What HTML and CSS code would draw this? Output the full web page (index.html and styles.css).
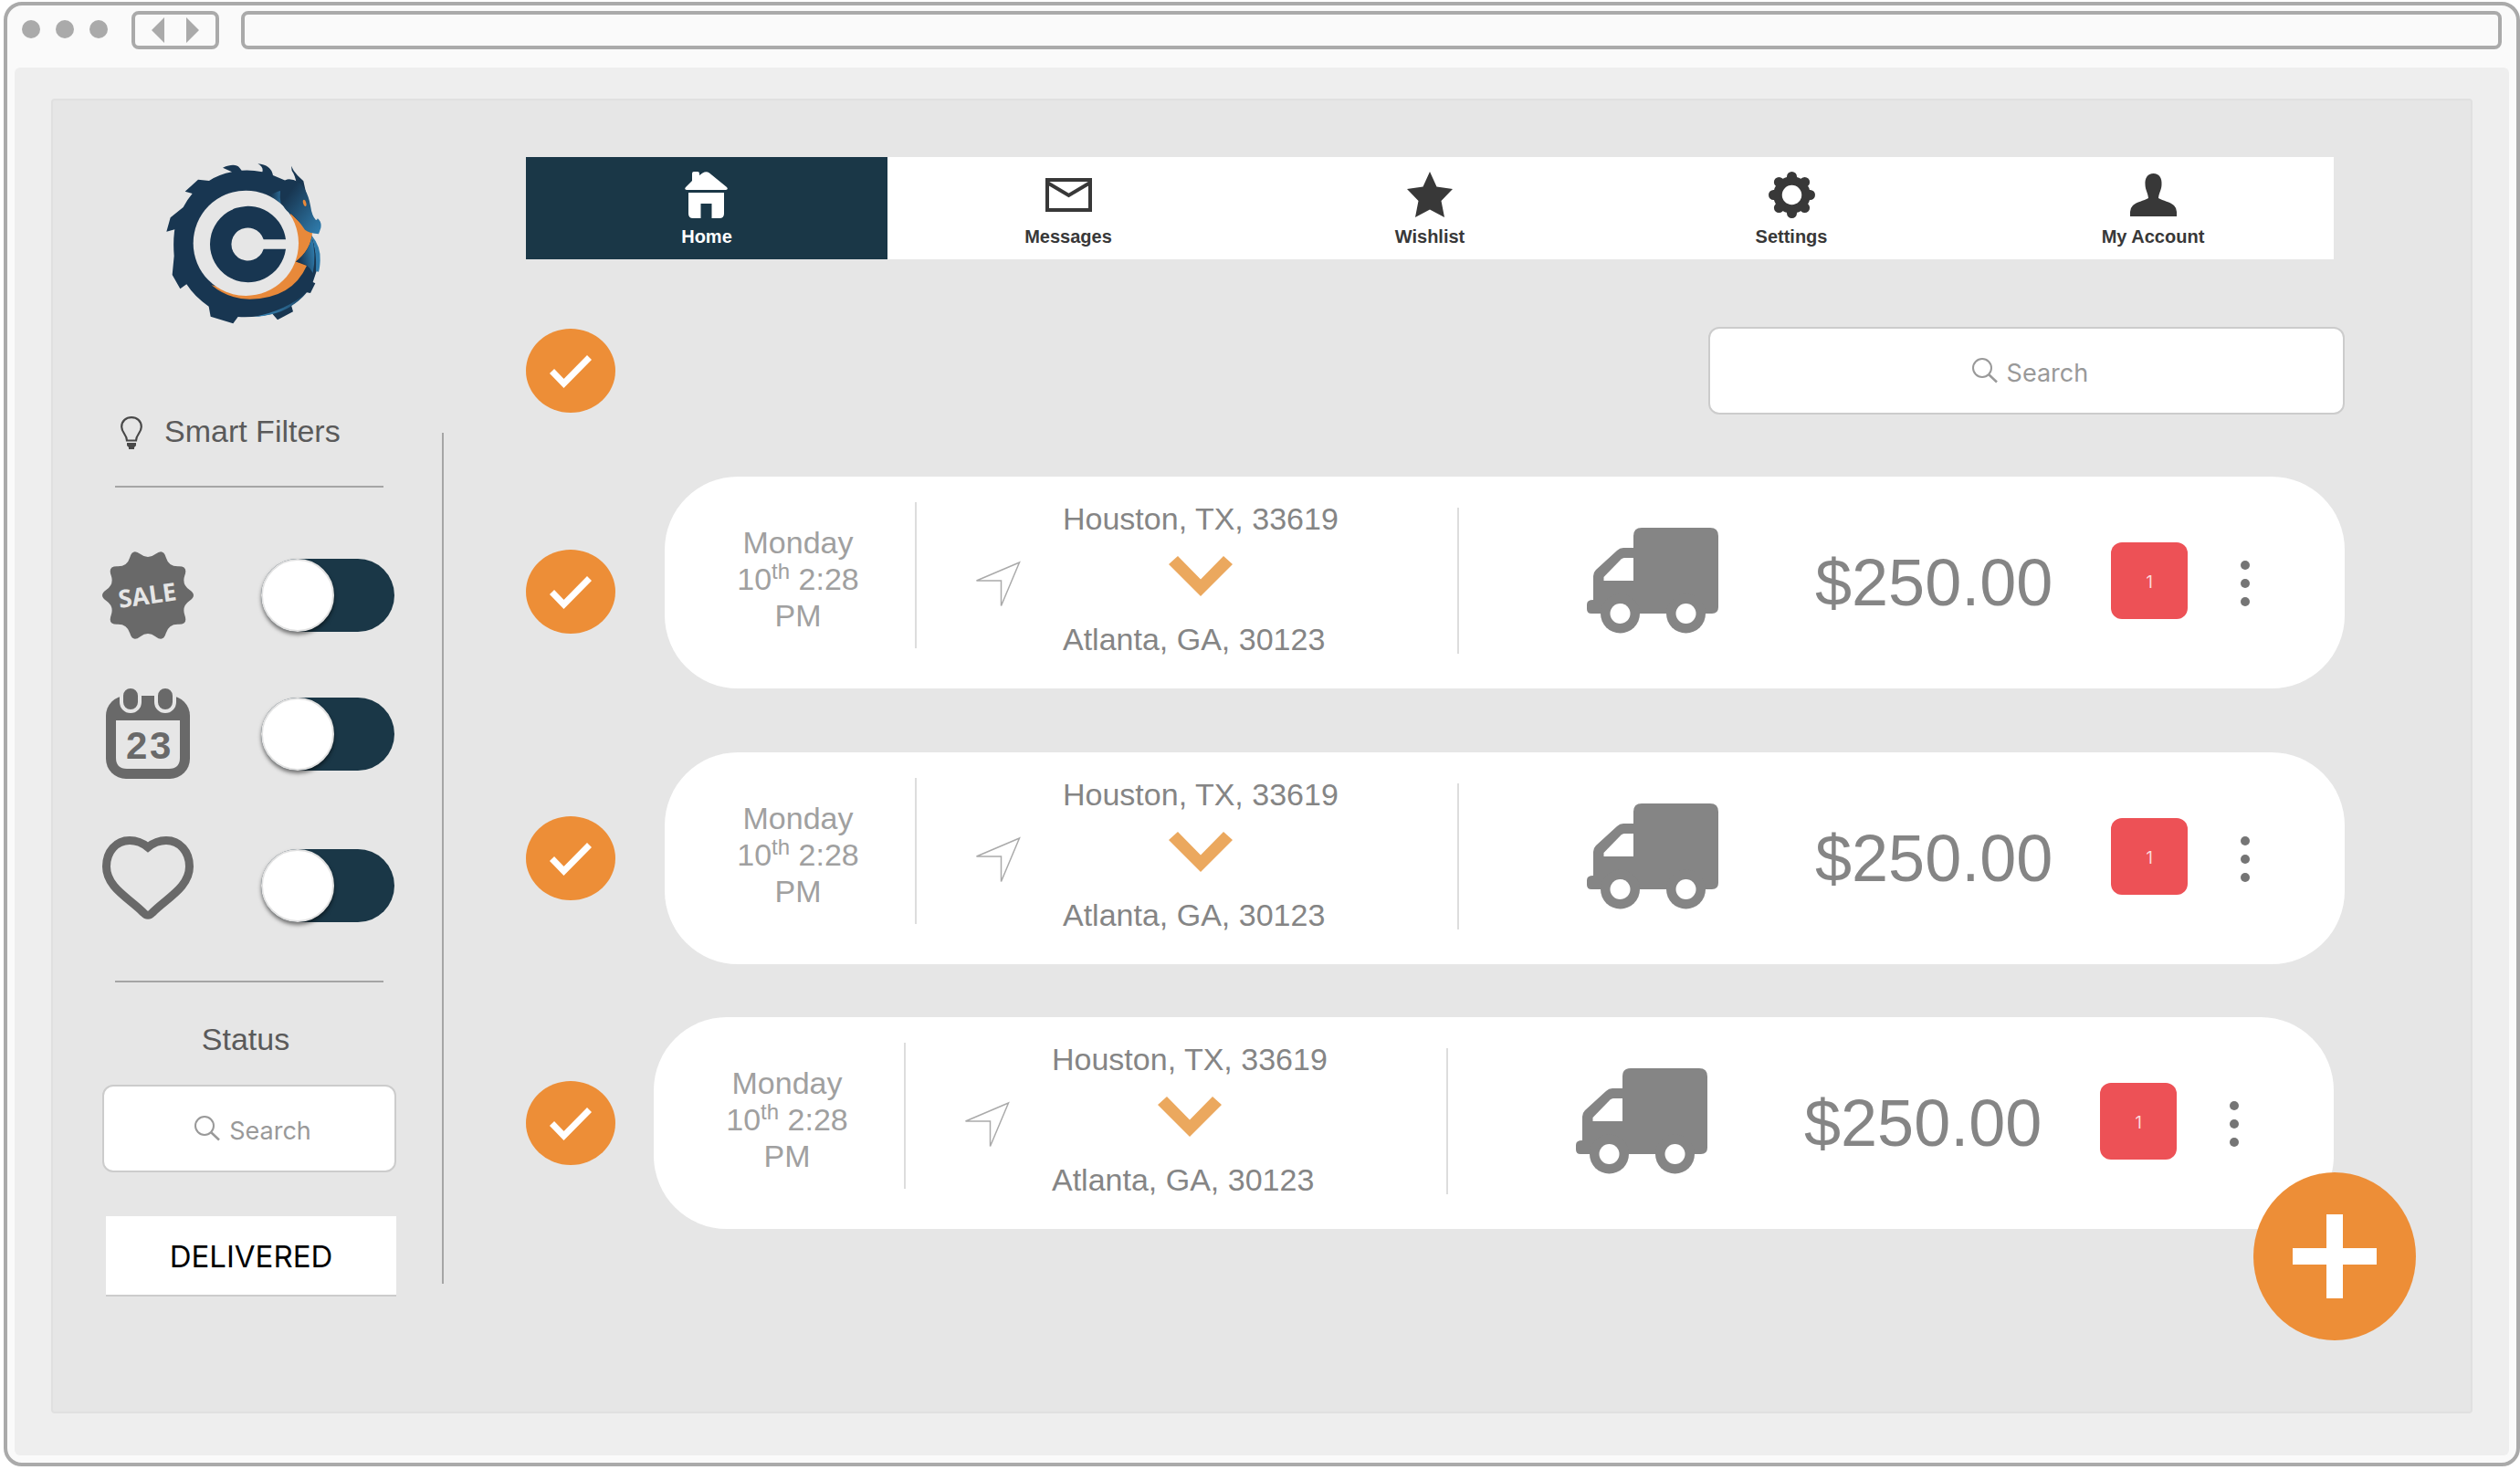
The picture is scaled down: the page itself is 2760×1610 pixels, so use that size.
FILE: index.html
```html
<!DOCTYPE html>
<html lang="en">
<head>
<meta charset="utf-8">
<meta name="viewport" content="width=device-width, initial-scale=1">
<title>Orders</title>
<link rel="stylesheet" href="styles.css">
</head>
<body>

<svg class="sprite" width="0" height="0" aria-hidden="true">
  <symbol id="i-search" viewBox="0 0 28 28">
    <circle cx="11" cy="11" r="10" fill="none" stroke="currentColor" stroke-width="2"/>
    <path d="M18.500 18.500L27 26.500" fill="none" stroke="currentColor" stroke-width="2.500"/>
  </symbol>
  <symbol id="i-check" viewBox="0 0 98 92">
    <path d="M28.500 46.500L41.500 60L69.500 31.500" fill="none" stroke="currentColor" stroke-width="7"/>
  </symbol>
  <symbol id="i-send" viewBox="0 0 50 56">
    <path d="M48.500 5L1.500 25H28.500V52.500Z" fill="none" stroke="currentColor" stroke-width="1.500"/>
  </symbol>
  <symbol id="i-chevron" viewBox="0 0 70 44">
    <path d="M0 9L10 0L35 25.500L60 0L70 9L35 44Z" fill="currentColor"/>
  </symbol>
  <symbol id="i-truck" viewBox="0 0 144 116">
    <path d="M51 22V9Q51 0 60 0H135Q144 0 144 9V87Q144 94 137 94H5Q0 94 0 89V84Q0 79 7 79V53Q7 49 10 46L33 25Q36 22 40 22Z" fill="currentColor"/>
    <path d="M51 33H41Q39 33 37.500 34.500L18.500 54V58H51Z" fill="#fff"/>
    <circle cx="36.500" cy="94" r="21.500" fill="currentColor"/><circle cx="36.500" cy="94" r="11" fill="#fff"/>
    <circle cx="108.500" cy="94" r="21.500" fill="currentColor"/><circle cx="108.500" cy="94" r="11" fill="#fff"/>
  </symbol>
  <symbol id="i-more" viewBox="0 0 10 50">
    <circle cx="5" cy="5" r="5" fill="currentColor"/><circle cx="5" cy="25" r="5" fill="currentColor"/><circle cx="5" cy="45" r="5" fill="currentColor"/>
  </symbol>
</svg>

<div class="browser">
  <header class="chrome">
    <span class="dot"></span><span class="dot"></span><span class="dot"></span>
    <div class="history">
      <svg width="52" height="28" viewBox="0 0 52 28" aria-hidden="true"><path d="M14 0V28L0 14ZM38 0V28L52 14Z" fill="#aaa"/></svg>
    </div>
    <input class="address" type="text" aria-label="Address">
  </header>

  <div class="viewport">
    <div class="canvas">
      <div class="columns">

        <aside class="sidebar">
          <a class="logo" href="#" aria-label="Company home">
            <svg width="170" height="176" viewBox="36 26 510 528" aria-hidden="true">
              <defs>
                <linearGradient id="g-head" x1="0.100" y1="0.200" x2="0.900" y2="1"><stop offset="0.100" stop-color="#183651"/><stop offset="1" stop-color="#2f7bab"/></linearGradient>
                <linearGradient id="g-fan" x1="0.100" y1="0.700" x2="1" y2="0.400"><stop offset="0.100" stop-color="#183651"/><stop offset="1" stop-color="#2f7bab"/></linearGradient>
                <linearGradient id="g-neck" x1="0" y1="0" x2="1" y2="0"><stop offset="0.200" stop-color="#183651"/><stop offset="1" stop-color="#2a6a96"/></linearGradient>
                <linearGradient id="g-tail" x1="0" y1="0" x2="1" y2="0"><stop offset="0" stop-color="#3a8dc0"/><stop offset="1" stop-color="#1d4767"/></linearGradient>
              </defs>
              <path fill="#183651" d="M222 40Q262 23 277 40L284 49Q315 46 352 54Q357 38 337 27Q380 30 387 65L428 82L490 150L505 250L514 262Q534 320 530 380L518 416L526 420L510 452L498 450Q472 480 447 492L453 513L402 540L385 520Q330 533 272 530L256 552L182 529L176 496Q130 465 103 423L82 438L56 392L62 330Q58 280 64 243L37 250L50 204L92 170Q105 145 122 125L98 118L141 79L177 83Q210 62 252 54Z"/>
              <path fill="url(#g-neck)" d="M372 132Q396 120 411 116Q408 136 413 158Q396 142 372 132Z"/>
              <path fill="#e8893a" d="M185 426Q240 472 310 472Q450 470 498 362L440 340L300 450ZM445 190L440 290L460 350Q512 310 516 255L480 225Z"/>
              <circle cx="298" cy="288" r="173" fill="#e6e6e6"/>
              <path fill="#183651" fill-rule="evenodd" d="M429 276A125 125 0 1 0 429 307H356A54 54 0 1 1 356 276Z"/>
              <path fill="#2f7bab" d="M514 262Q545 300 542 345Q541 370 537 382L528 380Q532 320 514 262Z"/>
              <path fill="url(#g-fan)" d="M462 349Q508 315 514 264Q530 325 518 386Q500 350 462 349Z"/>
              <path fill="#183651" d="M447 34Q454 52 468 66L487 84L496 125L465 95Q460 65 449 50Z"/>
              <path fill="url(#g-head)" d="M411 118Q413 80 440 78Q470 78 490 108Q505 135 510 165Q515 200 528 212Q534 212 533 206Q548 218 544 238L537 258Q508 256 492 244Q470 212 448 192Q412 175 411 118Z"/>
              <ellipse cx="491" cy="156" rx="5" ry="11" fill="#e8893a" transform="rotate(-15 491 156)"/>
              <path fill="url(#g-tail)" d="M325 530Q430 510 498 450Q450 506 385 521Q355 529 325 530Z"/>
            </svg>
          </a>

          <h2 class="heading">
            <svg width="24" height="36" viewBox="0 0 24 36" aria-hidden="true">
              <path d="M7 26.500C7 20 1.200 18 1.200 11.500C1.200 5 6 1.200 12 1.200C18 1.200 22.800 5 22.800 11.500C22.800 18 17 20 17 26.500Z" fill="none" stroke="#484848" stroke-width="2.200"/>
              <path d="M7 29H17V32L15 34V36H9V34L7 32Z" fill="#484848"/>
            </svg>
            Smart Filters
          </h2>
          <hr class="rule">

          <ul class="filters">
            <li class="filter">
              <svg width="100" height="96" viewBox="0 0 100 96" aria-hidden="true">
                <path fill="#696969" d="M95.600 42Q104.400 48 95.600 54T90.400 70T83.350 79.650T69.750 89.500T58.400 93.200T41.600 93.200T30.250 89.500T16.650 79.650T9.600 70T4.400 54T4.400 42T9.600 26T16.650 16.350T30.250 6.500T41.600 2.800T58.400 2.800T69.750 6.500T83.350 16.350T90.400 26T95.600 42Z"/>
                <text class="sale-text" x="19" y="62" transform="rotate(-8 19 62)">SALE</text>
              </svg>
              <input class="toggle" type="checkbox" role="switch" aria-label="On sale">
            </li>
            <li class="filter">
              <svg width="100" height="100" viewBox="-4 0 100 100" aria-hidden="true">
                <rect x="0" y="8" width="92" height="91" rx="22" fill="#696969"/>
                <path d="M11 35H81V76Q81 88 69 88H23Q11 88 11 76Z" fill="#e6e6e6"/>
                <rect x="17" y="-2" width="20" height="27" rx="10" fill="#696969" stroke="#e6e6e6" stroke-width="4"/>
                <rect x="55" y="-2" width="20" height="27" rx="10" fill="#696969" stroke="#e6e6e6" stroke-width="4"/>
                <text class="day-text" x="22" y="77">2</text><text class="day-text" x="48" y="77">3</text>
              </svg>
              <input class="toggle" type="checkbox" role="switch" aria-label="By date">
            </li>
            <li class="filter filter-favorites">
              <svg width="100" height="108" viewBox="0 0 100 108" aria-hidden="true">
                <path d="M50 12C44 7 37 4.500 30 4.500C15 4.500 4.500 17 4.500 33C4.500 56 30 68 45 83.500Q50 89 55 83.500C70 68 95.500 56 95.500 33C95.500 17 85 4.500 70 4.500C63 4.500 56 7 50 12Z" fill="none" stroke="#696969" stroke-width="9"/>
              </svg>
              <input class="toggle" type="checkbox" role="switch" aria-label="Favorites">
            </li>
          </ul>
          <hr class="rule">

          <h2 class="status">Status</h2>
          <label class="search">
            <svg width="28" height="28" aria-hidden="true"><use href="#i-search"/></svg>
            <input type="search" placeholder="Search" aria-label="Search status">
          </label>
          <button class="delivered" type="button">DELIVERED</button>
        </aside>

        <div class="divider"></div>

        <main class="main">
          <nav class="tabs" aria-label="Main">
            <a class="tab tab-active" href="#" aria-current="page">
              <svg width="48" height="51" viewBox="0 0 48 51" aria-hidden="true"><path fill="currentColor" d="M1 17L8 10V2Q8 0 10 0H14Q16 0 16 2V4L19.500 1.500Q23.500 -1 27 1.500L46 17Q48 19.500 45 20H2Q-1 19.500 1 17ZM4 23H43V46Q43 51 38 51H29.500V35H17.500V51H9Q4 51 4 46Z"/></svg>
              Home
            </a>
            <a class="tab" href="#">
              <svg width="51" height="51" viewBox="0 -7 51 51" aria-hidden="true"><path d="M2 2H49V35H2ZM2 5L25.500 19L49 5" fill="none" stroke="currentColor" stroke-width="4"/></svg>
              Messages
            </a>
            <a class="tab" href="#">
              <svg width="50" height="51" viewBox="0 0 50 51" aria-hidden="true"><path fill="currentColor" d="M25 0L32.500 16.500L50 19L37.500 32L41 50L25 41.500L9 50L12.500 32L0 19L17.500 16.500Z"/></svg>
              Wishlist
            </a>
            <a class="tab" href="#">
              <svg width="51" height="51" viewBox="-25.500 -25.500 51 51" aria-hidden="true">
                <circle r="15.500" fill="none" stroke="currentColor" stroke-width="9.500"/>
                <path d="M0 -18V-20M0 18V20M-18 0H-20M18 0H20M12.700 12.700L14.100 14.100M-12.700 12.700L-14.100 14.100M12.700 -12.700L14.100 -14.100M-12.700 -12.700L-14.100 -14.100" fill="none" stroke="currentColor" stroke-width="11" stroke-linecap="round"/>
              </svg>
              Settings
            </a>
            <a class="tab" href="#">
              <svg width="51" height="51" viewBox="0 -2 51 51" aria-hidden="true"><path fill="currentColor" d="M25.500 0C32 0 35 5 34.500 12C34.500 18 31.500 21 31 27C36 30 44 31 48 35Q51 38 51 42V47H0V42Q0 38 3 35C7 31 15 30 20 27C19.500 21 16.500 18 16.500 12C16 5 19 0 25.500 0Z"/></svg>
              My Account
            </a>
          </nav>

          <div class="toolbar">
            <label class="check"><input type="checkbox" checked aria-label="Select all orders"><svg width="98" height="92" aria-hidden="true"><use href="#i-check"/></svg></label>
            <label class="search search-orders">
              <svg width="28" height="28" aria-hidden="true"><use href="#i-search"/></svg>
              <input type="search" placeholder="Search" aria-label="Search orders">
            </label>
          </div>

          <ul class="orders">
            <li class="order order-first">
              <label class="check"><input type="checkbox" checked aria-label="Select order 1"><svg width="98" height="92" aria-hidden="true"><use href="#i-check"/></svg></label>
              <article class="card">
                <div class="date"><p>Monday 10<sup>th</sup> 2:28 PM</p></div>
                <div class="trip">
                  <svg class="send" width="50" height="56" aria-hidden="true"><use href="#i-send"/></svg>
                  <div class="route"><p>Houston, TX, 33619</p><svg class="arrow" width="70" height="44" aria-hidden="true"><use href="#i-chevron"/></svg><p>Atlanta, GA, 30123</p></div>
                </div>
                <div class="summary">
                  <svg class="truck" width="144" height="116" aria-hidden="true"><use href="#i-truck"/></svg>
                  <p class="price">$250.00</p>
                  <span class="badge">1</span>
                  <button class="more" type="button" aria-label="More actions"><svg width="10" height="50" aria-hidden="true"><use href="#i-more"/></svg></button>
                </div>
              </article>
            </li>
            <li class="order order-second">
              <label class="check"><input type="checkbox" checked aria-label="Select order 2"><svg width="98" height="92" aria-hidden="true"><use href="#i-check"/></svg></label>
              <article class="card">
                <div class="date"><p>Monday 10<sup>th</sup> 2:28 PM</p></div>
                <div class="trip">
                  <svg class="send" width="50" height="56" aria-hidden="true"><use href="#i-send"/></svg>
                  <div class="route"><p>Houston, TX, 33619</p><svg class="arrow" width="70" height="44" aria-hidden="true"><use href="#i-chevron"/></svg><p>Atlanta, GA, 30123</p></div>
                </div>
                <div class="summary">
                  <svg class="truck" width="144" height="116" aria-hidden="true"><use href="#i-truck"/></svg>
                  <p class="price">$250.00</p>
                  <span class="badge">1</span>
                  <button class="more" type="button" aria-label="More actions"><svg width="10" height="50" aria-hidden="true"><use href="#i-more"/></svg></button>
                </div>
              </article>
            </li>
            <li class="order order-third">
              <label class="check"><input type="checkbox" checked aria-label="Select order 3"><svg width="98" height="92" aria-hidden="true"><use href="#i-check"/></svg></label>
              <article class="card">
                <div class="date"><p>Monday 10<sup>th</sup> 2:28 PM</p></div>
                <div class="trip">
                  <svg class="send" width="50" height="56" aria-hidden="true"><use href="#i-send"/></svg>
                  <div class="route"><p>Houston, TX, 33619</p><svg class="arrow" width="70" height="44" aria-hidden="true"><use href="#i-chevron"/></svg><p>Atlanta, GA, 30123</p></div>
                </div>
                <div class="summary">
                  <svg class="truck" width="144" height="116" aria-hidden="true"><use href="#i-truck"/></svg>
                  <p class="price">$250.00</p>
                  <span class="badge">1</span>
                  <button class="more" type="button" aria-label="More actions"><svg width="10" height="50" aria-hidden="true"><use href="#i-more"/></svg></button>
                </div>
              </article>
            </li>
          </ul>
        </main>
      </div>

      <button class="add" type="button" aria-label="Add order">
        <svg width="92" height="92" viewBox="0 0 92 92" aria-hidden="true"><path d="M46 0V92M0 46H92" fill="none" stroke="#fff" stroke-width="18"/></svg>
      </button>
    </div>
  </div>
</div>
</body>
</html>
```
FILE: styles.css
```css
*,
*::before {
  box-sizing: border-box;
}

body {
  display: flex;
  min-height: 100vh;
  margin: 0;
  background: #fff;
  font-family: "Liberation Sans", Arial, sans-serif;
  font-size: 34px;
  line-height: 40px;
}

h2, p, ul {
  margin: 0;
  padding: 0;
  font-size: inherit;
  font-weight: normal;
  list-style: none;
}

svg {
  display: block;
  flex: none;
}

.sprite {
  position: absolute;
}

/* Browser frame */

.browser {
  display: flex;
  flex: 1;
  flex-direction: column;
  min-width: 0;
  margin: 2px 0 4px 4px;
  border: 4px solid #aaa;
  border-radius: 20px;
  background: #fafafa;
}

.chrome {
  display: flex;
  align-items: center;
  padding: 6px 16px 20px;
}

.dot {
  width: 20px;
  height: 20px;
  margin: 0 17px 2px 0;
  border-radius: 50%;
  background: #aaa;
}

.history {
  display: flex;
  align-items: center;
  justify-content: center;
  width: 96px;
  height: 42px;
  margin: 0 24px 0 9px;
  border: 4px solid #aaa;
  border-radius: 8px;
}

.address {
  flex: 1;
  min-width: 0;
  height: 42px;
  padding: 0 12px;
  border: 4px solid #aaa;
  border-radius: 8px;
  background: #fafafa;
  font: 20px "Liberation Sans", Arial, sans-serif;
}

.viewport {
  display: flex;
  flex: 1;
  margin: 0 8px 8px;
  padding: 34px 40px 46px;
  border-radius: 6px;
  background: #eee;
}

.canvas {
  position: relative;
  flex: 1;
  min-width: 0;
  border: 2px solid #e0e0e0;
  border-radius: 4px;
  background: #e6e6e6;
}

.columns {
  display: flex;
}

/* Sidebar */

.sidebar {
  flex: none;
  width: 426px;
  padding: 69px 50px 0 54px;
}

.logo {
  display: block;
  width: 170px;
  margin-left: 70px;
}

.heading {
  display: flex;
  align-items: flex-end;
  gap: 24px;
  margin: 97px 0 40px 20px;
  color: #5a5a5a;
}

.rule {
  height: 2px;
  margin: 0 14px;
  border: 0;
  background: #a5a5a5;
}

.filters {
  display: flex;
  flex-direction: column;
  gap: 52px;
  padding: 68px 2px 50px 0;
}

.filter {
  display: flex;
  align-items: center;
  justify-content: space-between;
  min-height: 100px;
}

.filter-favorites {
  margin-top: 10px;
}

.sale-text {
  fill: #e6e6e6;
  font: bold 27px "Open Sans", sans-serif;
}

.day-text {
  fill: #696969;
  font: bold 42px "Liberation Sans", Arial, sans-serif;
}

.toggle {
  width: 146px;
  height: 80px;
  margin: 0;
  border-radius: 40px;
  background: #1a3747;
  appearance: none;
}

.toggle::before {
  content: "";
  display: block;
  width: 80px;
  height: 80px;
  border: 2px solid #e2e2e2;
  border-radius: 50%;
  background: #fff;
  box-shadow: 0 3px 4px rgba(0, 0, 0, 0.5);
}

.toggle:checked::before {
  margin-left: auto;
}

.status {
  margin: 42px 8px 30px 0;
  color: #5a5a5a;
  text-align: center;
}

.search {
  display: flex;
  align-items: center;
  justify-content: center;
  gap: 10px;
  height: 96px;
  padding-left: 8px;
  border: 2px solid #ccc;
  border-radius: 12px;
  background: #fff;
  color: #999;
}

.search input {
  field-sizing: content;
  max-width: 80%;
  padding: 5px 0 0;
  border: 0;
  outline: 0;
  background: none;
  color: #555;
  font: 27px Inter, sans-serif;
  appearance: none;
}

.search input::placeholder {
  color: #999;
  opacity: 1;
}

.delivered {
  display: block;
  width: calc(100% - 4px);
  height: 88px;
  margin: 48px 0 0 4px;
  padding: 2px 0 0;
  border: 0;
  border-bottom: 2px solid #ccc;
  background: #fff;
  color: #000;
  font: 33px Inter, sans-serif;
}

.divider {
  flex: none;
  width: 2px;
  margin: 364px 0 14px;
  background: #a5a5a5;
}

/* Main column */

.main {
  flex: 1;
  min-width: 0;
  padding: 62px 138px 0 90px;
}

.tabs {
  display: grid;
  grid-template-columns: repeat(5, 1fr);
  margin-right: 12px;
  background: #fff;
}

.tab {
  display: flex;
  flex-direction: column;
  align-items: center;
  gap: 8px;
  padding: 16px 0 13px;
  color: #383838;
  font-size: 20px;
  font-weight: bold;
  line-height: 24px;
  text-decoration: none;
}

.tab-active {
  background: #1a3747;
  color: #fff;
}

.toolbar {
  display: flex;
  align-items: center;
  justify-content: space-between;
  margin: 74px 0 68px;
}

.search-orders {
  width: 35%;
}

.check {
  flex: none;
  width: 98px;
  height: 92px;
  border-radius: 50%;
  background: #ed8e37;
  color: #fff;
}

.check input {
  position: absolute;
  margin: 0;
  opacity: 0;
}

.check input:not(:checked) + svg {
  visibility: hidden;
}

.order {
  display: flex;
  align-items: center;
  gap: 54px;
}

.order-first .check {
  margin-top: 20px;
}

.order-second {
  margin-top: 70px;
}

.order-third {
  gap: 42px;
  margin-top: 58px;
  padding-right: 12px;
}

/* Order card */

.card {
  display: grid;
  flex: 1;
  grid-template-columns: 276fr 594fr 970fr;
  align-items: center;
  min-width: 0;
  height: 232px;
  padding-bottom: 4px;
  border-radius: 80px;
  background: #fff;
  color: #858585;
}

.date {
  display: flex;
  align-items: center;
  justify-content: center;
  height: 160px;
  margin-bottom: 12px;
  padding: 8px 0 0 18px;
  border-right: 2px solid #ddd;
  color: #a0a0a0;
  text-align: center;
}

.date p {
  width: 150px;
}

.date sup {
  font-size: 24px;
  line-height: 0;
}

.trip {
  display: flex;
  align-items: center;
  height: 160px;
  border-right: 2px solid #ddd;
}

.send {
  margin: 6px 46px 0 64px;
  color: #aaa;
}

.route {
  margin-bottom: 4px;
  white-space: nowrap;
}

.arrow {
  margin: 21px auto 27px;
  color: #eba85e;
}

.summary {
  display: flex;
  align-items: center;
  padding-left: 140px;
}

.price {
  margin: 4px 64px 0 106px;
  font-size: 72px;
  line-height: 80px;
}

.badge {
  width: 84px;
  height: 84px;
  padding-top: 2px;
  border-radius: 12px;
  background: #ed5156;
  color: #fbdcdd;
  font: 18px/84px Inter, sans-serif;
  text-align: center;
}

.more {
  margin-left: 58px;
  padding: 6px 0 0;
  border: 0;
  background: none;
  color: #757575;
}

.add {
  position: absolute;
  right: 60px;
  bottom: 78px;
  display: flex;
  align-items: center;
  justify-content: center;
  width: 178px;
  height: 184px;
  padding: 0;
  border: 0;
  border-radius: 50%;
  background: #ed8e37;
}
```
